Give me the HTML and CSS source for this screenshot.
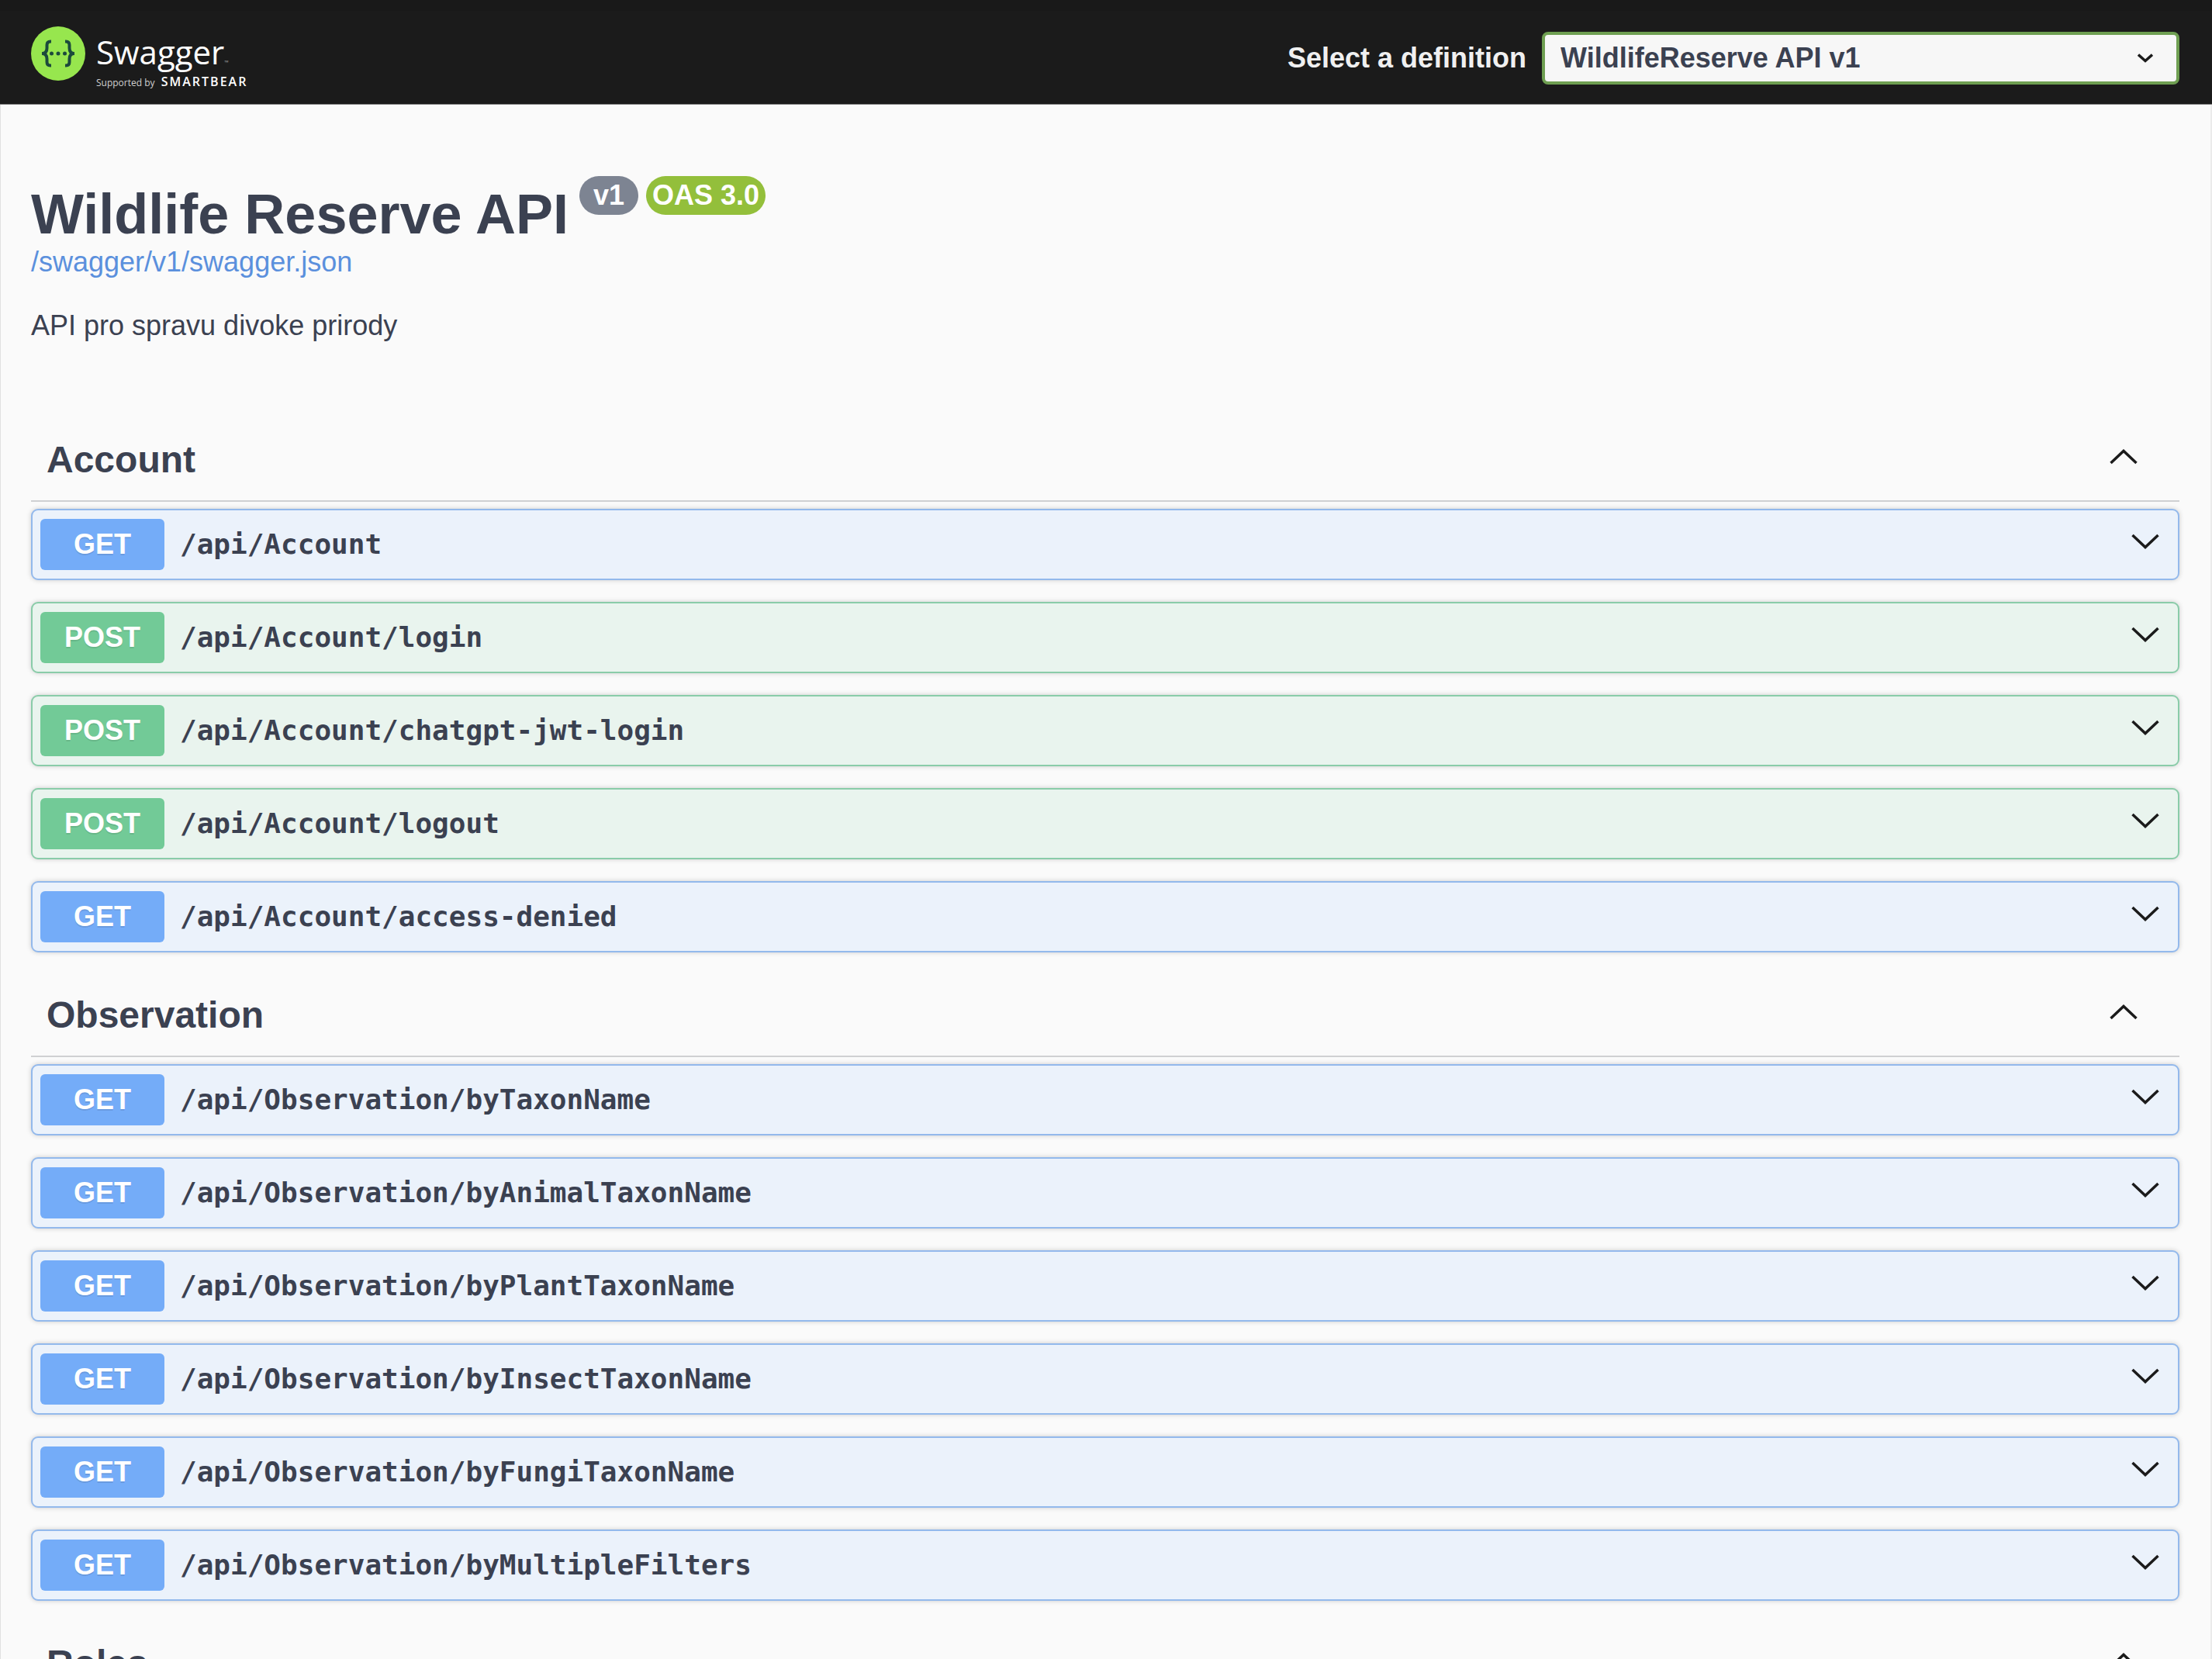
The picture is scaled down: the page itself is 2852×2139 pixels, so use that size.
FILE: index.html
```html
<!DOCTYPE html>
<html lang="en">
<head>
<meta charset="utf-8">
<title>Swagger UI</title>
<link rel="stylesheet" href="styles.css">
</head>
<body>
<svg class="sprite" aria-hidden="true">
  <symbol id="down" viewBox="0 0 36 20"><path d="M1.500 2 18 17.500 34.500 2" fill="none" stroke="currentColor" stroke-width="3.500"/></symbol>
  <symbol id="up" viewBox="0 0 36 20"><path d="M1.500 18 18 2.500 34.500 18" fill="none" stroke="currentColor" stroke-width="3.500"/></symbol>
</svg>
<header class="topbar">
  <a class="logo" href="#">
    <svg class="logo-mark" viewBox="0 0 70 70" aria-hidden="true">
      <circle cx="35" cy="35" r="35" fill="#97e64e"/>
      <g fill="none" stroke="#1c4a3c" stroke-width="4">
        <path d="M26 19.500h-1q-4.500 0-4.500 4.500v4q0 7-6.500 7q6.500 0 6.500 7v4q0 4.500 4.500 4.500h1"/>
        <path d="M44 19.500h1q4.500 0 4.500 4.500v4q0 7 6.500 7q-6.500 0-6.500 7v4q0 4.500-4.500 4.500h-1"/>
      </g>
      <g fill="#1c4a3c"><circle cx="26.500" cy="35" r="2.500"/><circle cx="35" cy="35" r="2.500"/><circle cx="43.500" cy="35" r="2.500"/></g>
    </svg>
    <span class="logo-text">
      <span class="logo-name">Swagger<span class="logo-tm">™</span></span>
      <span class="logo-by">Supported by <b class="logo-brand">SMARTBEAR</b></span>
    </span>
  </a>
  <form class="definition">
    <label class="definition-label" for="definition">Select a definition</label>
    <span class="select-box">
      <select id="definition" class="select"><option>WildlifeReserve API v1</option></select>
      <svg class="select-arrow" viewBox="0 0 20 12" aria-hidden="true"><path d="M1 1.500 10 9.500 19 1.500" fill="none" stroke="currentColor" stroke-width="3.500"/></svg>
    </span>
  </form>
</header>
<main class="page">
  <section class="info">
    <div class="title-row">
      <h1 class="title">Wildlife Reserve API</h1>
      <span class="pill pill-version">v1</span>
      <span class="pill pill-oas">OAS 3.0</span>
    </div>
    <a class="spec-link" href="#">/swagger/v1/swagger.json</a>
    <p class="description">API pro spravu divoke prirody</p>
  </section>

  <section class="tag">
    <h2 class="tag-title"><button class="tag-button" type="button">Account<svg class="chevron"><use href="#up"/></svg></button></h2>
    <div class="operations">
      <button class="op get" type="button"><span class="method">GET</span><span class="path">/api/Account</span><svg class="chevron"><use href="#down"/></svg></button>
      <button class="op post" type="button"><span class="method">POST</span><span class="path">/api/Account/login</span><svg class="chevron"><use href="#down"/></svg></button>
      <button class="op post" type="button"><span class="method">POST</span><span class="path">/api/Account/chatgpt-jwt-login</span><svg class="chevron"><use href="#down"/></svg></button>
      <button class="op post" type="button"><span class="method">POST</span><span class="path">/api/Account/logout</span><svg class="chevron"><use href="#down"/></svg></button>
      <button class="op get" type="button"><span class="method">GET</span><span class="path">/api/Account/access-denied</span><svg class="chevron"><use href="#down"/></svg></button>
    </div>
  </section>

  <section class="tag">
    <h2 class="tag-title"><button class="tag-button" type="button">Observation<svg class="chevron"><use href="#up"/></svg></button></h2>
    <div class="operations">
      <button class="op get" type="button"><span class="method">GET</span><span class="path">/api/Observation/byTaxonName</span><svg class="chevron"><use href="#down"/></svg></button>
      <button class="op get" type="button"><span class="method">GET</span><span class="path">/api/Observation/byAnimalTaxonName</span><svg class="chevron"><use href="#down"/></svg></button>
      <button class="op get" type="button"><span class="method">GET</span><span class="path">/api/Observation/byPlantTaxonName</span><svg class="chevron"><use href="#down"/></svg></button>
      <button class="op get" type="button"><span class="method">GET</span><span class="path">/api/Observation/byInsectTaxonName</span><svg class="chevron"><use href="#down"/></svg></button>
      <button class="op get" type="button"><span class="method">GET</span><span class="path">/api/Observation/byFungiTaxonName</span><svg class="chevron"><use href="#down"/></svg></button>
      <button class="op get" type="button"><span class="method">GET</span><span class="path">/api/Observation/byMultipleFilters</span><svg class="chevron"><use href="#down"/></svg></button>
    </div>
  </section>

  <section class="tag">
    <h2 class="tag-title"><button class="tag-button" type="button">Roles<svg class="chevron"><use href="#up"/></svg></button></h2>
  </section>
</main>
</body>
</html>
```
FILE: styles.css
```css
* {
  box-sizing: border-box;
}

html {
  scrollbar-width: none;
}

body {
  margin: 0;
  background: #fafafa;
  color: #3b4151;
  font: 36px/44px "Liberation Sans", Arial, sans-serif;
}

button,
select {
  margin: 0;
  color: inherit;
  font: inherit;
}

.sprite {
  display: none;
}

/* Top bar */

.topbar {
  display: flex;
  align-items: flex-start;
  justify-content: space-between;
  padding: 20px 42px 18px 40px;
  border-top: 14px solid #191919;
  border-bottom: 1px solid #808080;
  background: #1b1b1b;
}

.logo {
  display: flex;
  gap: 14px;
  color: #fff;
  text-decoration: none;
}

.logo-mark {
  width: 70px;
  height: 70px;
}

.logo-text {
  display: flex;
  flex-direction: column;
  padding-top: 4px;
  font-family: "Open Sans", sans-serif;
}

.logo-name {
  font-size: 42px;
  line-height: 58px;
  font-weight: 400;
}

.logo-tm {
  font-size: 7px;
  line-height: 8px;
  color: #a0a0a0;
}

.logo-by {
  font-size: 12px;
  line-height: 18px;
  color: #d0d0d0;
}

.logo-brand {
  margin-left: 5px;
  font-size: 16px;
  font-weight: 600;
  letter-spacing: 2px;
  color: #fff;
}

.definition {
  display: flex;
  align-items: center;
  gap: 20px;
  padding-top: 7px;
}

.definition-label {
  color: #f0f0f0;
  font-weight: 700;
}

.select-box {
  display: grid;
  align-items: center;
  width: 822px;
}

.select {
  grid-area: 1 / 1;
  width: 100%;
  height: 68px;
  padding: 0 80px 0 20px;
  border: 4px solid #6f9f52;
  border-radius: 8px;
  background: #f7f7f7;
  font-weight: 700;
  appearance: none;
}

.select-arrow {
  grid-area: 1 / 1;
  justify-self: end;
  width: 20px;
  height: 12px;
  margin-right: 34px;
  color: #1b1b1b;
  pointer-events: none;
}

/* Page */

.page {
  padding: 92px 40px 0 39px;
  border-left: 1px solid #e0e0e0;
  border-right: 2px solid #ebebeb;
}

.info {
  padding-bottom: 98px;
}

.title-row {
  display: flex;
  align-items: flex-start;
  gap: 10px;
}

.title {
  margin: 0;
  padding: 9px 4px 0 0;
  font-size: 72px;
  line-height: 80px;
}

.pill {
  border-radius: 25px;
  color: #fff;
  font-weight: 700;
  line-height: 50px;
}

.pill-version {
  padding: 0 18px;
  background: #7d8492;
}

.pill-oas {
  padding: 0 8px;
  background: #93bf3b;
}

.spec-link {
  display: block;
  color: #5b90dd;
  text-decoration: none;
}

.description {
  margin: 38px 0 0;
}

/* Tags and operations */

.tag-title {
  margin: 0 0 9px;
  border-bottom: 2px solid #cfd0d2;
  font-size: 48px;
}

.tag-button {
  display: flex;
  align-items: center;
  justify-content: space-between;
  width: 100%;
  height: 105px;
  padding: 0 54px 0 20px;
  border: 0;
  background: none;
}

.chevron {
  flex: none;
  width: 36px;
  height: 20px;
  margin-bottom: 8px;
  color: #1b1b1b;
}

.operations {
  display: flex;
  flex-direction: column;
  gap: 28px;
  padding-bottom: 28px;
}

.op {
  display: flex;
  align-items: center;
  width: 100%;
  padding: 11px 24px 11px 10px;
  border: 2px solid;
  border-radius: 9px;
  box-shadow: 0 0 6px rgba(0, 0, 0, 0.19);
  text-align: left;
}

.get {
  border-color: #93b9ec;
  background: #ebf2fb;
}

.post {
  border-color: #8acca9;
  background: #e9f4ee;
}

.method {
  width: 160px;
  border-radius: 6px;
  color: #fff;
  font-weight: 700;
  line-height: 66px;
  text-align: center;
  text-shadow: 0 2px 0 rgba(0, 0, 0, 0.1);
}

.get .method {
  background: #74acf8;
}

.post .method {
  background: #72ca97;
}

.path {
  flex: 1;
  padding-left: 20px;
  color: #3b4151;
  font-family: "DejaVu Sans Mono", monospace;
  font-weight: 700;
}
```
